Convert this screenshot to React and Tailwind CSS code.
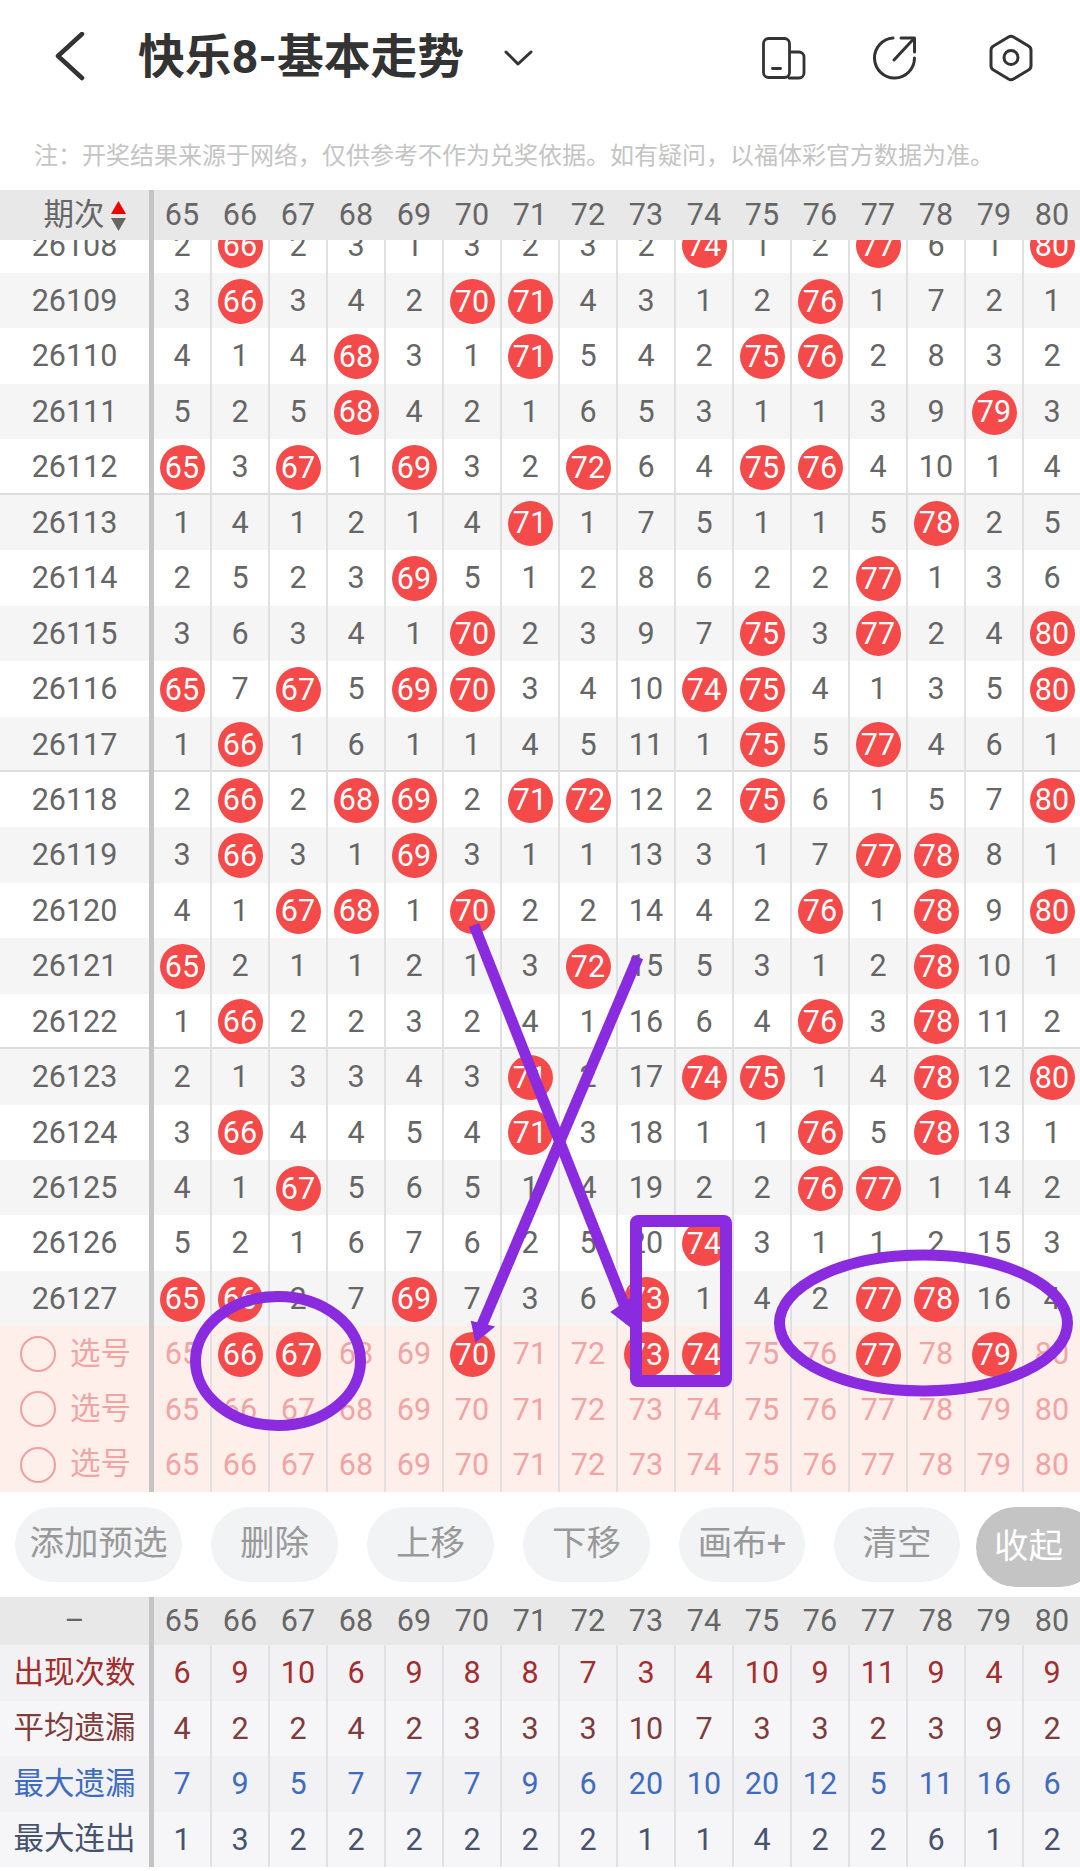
const COLS = [65,66,67,68,69,70,71,72,73,74,75,76,77,78,79,80];
const NOTICE = "注\uFF1A开奖结果来源于网络\uFF0C仅供参考不作为兑奖依据。如有疑问\uFF0C以福体彩官方数据为准。";
const ROWS = [
 ["26108",[2,66,2,3,1,3,2,3,2,74,1,2,77,6,1,80]],
 ["26109",[3,66,3,4,2,70,71,4,3,1,2,76,1,7,2,1]],
 ["26110",[4,1,4,68,3,1,71,5,4,2,75,76,2,8,3,2]],
 ["26111",[5,2,5,68,4,2,1,6,5,3,1,1,3,9,79,3]],
 ["26112",[65,3,67,1,69,3,2,72,6,4,75,76,4,10,1,4]],
 ["26113",[1,4,1,2,1,4,71,1,7,5,1,1,5,78,2,5]],
 ["26114",[2,5,2,3,69,5,1,2,8,6,2,2,77,1,3,6]],
 ["26115",[3,6,3,4,1,70,2,3,9,7,75,3,77,2,4,80]],
 ["26116",[65,7,67,5,69,70,3,4,10,74,75,4,1,3,5,80]],
 ["26117",[1,66,1,6,1,1,4,5,11,1,75,5,77,4,6,1]],
 ["26118",[2,66,2,68,69,2,71,72,12,2,75,6,1,5,7,80]],
 ["26119",[3,66,3,1,69,3,1,1,13,3,1,7,77,78,8,1]],
 ["26120",[4,1,67,68,1,70,2,2,14,4,2,76,1,78,9,80]],
 ["26121",[65,2,1,1,2,1,3,72,15,5,3,1,2,78,10,1]],
 ["26122",[1,66,2,2,3,2,4,1,16,6,4,76,3,78,11,2]],
 ["26123",[2,1,3,3,4,3,71,2,17,74,75,1,4,78,12,80]],
 ["26124",[3,66,4,4,5,4,71,3,18,1,1,76,5,78,13,1]],
 ["26125",[4,1,67,5,6,5,1,4,19,2,2,76,77,1,14,2]],
 ["26126",[5,2,1,6,7,6,2,5,20,74,3,1,1,2,15,3]],
 ["26127",[65,66,2,7,69,7,3,6,73,1,4,2,77,78,16,4]],
];
const PICKS = [[66,67,70,73,74,77,79],[],[]];
const STATS = [
 ["出现次数",[6,9,10,6,9,8,8,7,3,4,10,9,11,9,4,9],"text-[#a32e2e]","bg-[#f2f2f5]"],
 ["平均遗漏",[4,2,2,4,2,3,3,3,10,7,3,3,2,3,9,2],"text-[#7d3d3d]","bg-[#f6f6f8]"],
 ["最大遗漏",[7,9,5,7,7,7,9,6,20,10,20,12,5,11,16,6],"text-[#3f6cc0]","bg-[#f2f2f5]"],
 ["最大连出",[1,3,2,2,2,2,2,2,1,1,4,2,2,6,1,2],"text-[#47536e]","bg-[#f6f6f8]"],
];
const BUTTONS = [["添加预选","w-[167px]"],["删除","w-[127px]"],["上移","w-[127px]"],["下移","w-[127px]"],["画布+","w-[126px]"],["清空","w-[126px]"]];

function Ball({ n }) {
  return (
    <span className="w-[45px] h-[45px] pt-[1px] rounded-full bg-[#f44a4a] text-white flex items-center justify-center">{n}</span>
  );
}

function Cell({ children, line = true }) {
  return (
    <div className={`w-[58px] h-full pt-[1px] shrink-0 flex items-center justify-center box-border border-r-2 ${line ? "border-[#e0e0e0]" : "border-transparent"}`}>
      {children}
    </div>
  );
}

function Head({ left }) {
  return (
    <div className="flex h-full bg-[#e8e8e8] text-[#666666]">
      <div className="w-[154px] h-full pt-[1px] shrink-0 box-border border-r-[5px] border-[#c4c4c4] flex items-center justify-center">{left}</div>
      {COLS.map((c) => <Cell key={c} line={false}>{c}</Cell>)}
    </div>
  );
}

export default function App() {
  return (
    <div className="relative w-[1080px] h-[1871px] overflow-hidden bg-white text-[30.5px] leading-none font-[Roboto,'Noto_Sans_CJK_SC',sans-serif]">
      {/* Title bar */}
      <div className="h-[115px] flex items-center pl-[54px]">
        <svg className="w-[34px] h-[52px] shrink-0" viewBox="54 32 34 52" fill="none" stroke="#333" strokeWidth="4.5" strokeLinecap="round" strokeLinejoin="round">
          <path d="M82 34 58 56 82 78" />
        </svg>
        <h1 className="ml-[50px] w-[330px] shrink-0 text-[46.8px] font-bold text-[#333333] leading-none whitespace-nowrap">快乐8-基本走势</h1>
        <svg className="ml-[36px] w-[30px] h-[18px] shrink-0" viewBox="504 48 30 18" fill="none" stroke="#333" strokeWidth="3" strokeLinecap="round" strokeLinejoin="round">
          <path d="M506 51 518 63 531 51" />
        </svg>
        <div className="ml-[228px] flex items-center">
          <svg className="w-[44px] h-[44px]" viewBox="762 36 44 44" fill="none" stroke="#333" strokeWidth="2.8" strokeLinecap="round" strokeLinejoin="round">
            <rect x="763.5" y="38.5" width="26" height="39" rx="5" />
            <path d="M790 52h9a5 5 0 0 1 5 5v16a5 5 0 0 1-5 5h-10" />
            <path d="M772.5 68.5h8" />
          </svg>
          <svg className="ml-[67px] w-[44px] h-[44px]" viewBox="873 36 44 44" fill="none" stroke="#333" strokeWidth="3" strokeLinecap="round" strokeLinejoin="round">
            <path d="M893 38a20 20 0 1 0 21.5 20" />
            <path d="M894 60 914 38.5" />
            <path d="M901 38h13.5v14" />
          </svg>
          <svg className="ml-[72px] w-[44px] h-[48px]" viewBox="989 34 44 48" fill="none" stroke="#333" strokeWidth="3" strokeLinecap="round" strokeLinejoin="round">
            <path d="M1008.5 37a5 5 0 0 1 5 0l15 9a5 5 0 0 1 2.5 4.3v15.4a5 5 0 0 1-2.5 4.3l-15 9a5 5 0 0 1-5 0l-15-9a5 5 0 0 1-2.5-4.3V50.300a5 5 0 0 1 2.500-4.300z" />
            <circle cx="1011" cy="57.500" r="7" />
          </svg>
        </div>
      </div>

      {/* Notice */}
      <div className="h-[75px] pl-[34px] pt-[24px] text-[24px] leading-[30px] text-[#c4c4c4] whitespace-nowrap font-['Noto_Sans_CJK_SC',sans-serif]">
        {NOTICE}
      </div>

      {/* Trend table header */}
      <div className="h-[50px]">
        <Head left={
          <div className="flex items-center pl-[20px] gap-[6px]">
            <span>期次</span>
            <span className="flex flex-col gap-[4px]">
              <svg className="w-[15px] h-[13px]" viewBox="0 0 15 13"><path d="M7.500 0 15 13H0z" fill="#f00000" /></svg>
              <svg className="w-[15px] h-[13px]" viewBox="0 0 15 13"><path d="M0 0h15L7.500 13z" fill="#666666" /></svg>
            </span>
          </div>
        } />
      </div>

      {/* Trend table body */}
      <div className="h-[1253px] overflow-hidden text-[#666666]">
        <div className="mt-[-22.4px]">
          {ROWS.map(([id, vals], i) => (
            <div key={id} className={`flex h-[55.44px] box-border ${i % 2 === 1 ? "bg-[#f5f5f5]" : "bg-white"} ${(i === 4 || i === 9 || i === 14) ? "shadow-[inset_0_-2px_0_#dddddd]" : ""}`}>
              <div className="w-[154px] h-full pt-[1px] shrink-0 box-border border-r-[5px] border-[#c4c4c4] flex items-center justify-center">{id}</div>
              {vals.map((v, j) => (
                <Cell key={j}>{v === COLS[j] ? <Ball n={v} /> : v}</Cell>
              ))}
            </div>
          ))}
          {PICKS.map((p, i) => (
            <div key={i} className="flex h-[55.33px] bg-[#ffefea] text-[#f2a4a4]">
              <div className="w-[154px] h-full shrink-0 box-border border-r-[5px] border-[#c4c4c4] flex items-center pl-[20px] gap-[14px]">
                <span className="w-[36px] h-[36px] rounded-full border-2 border-[#f0a0a0] box-border" />
                <span>选号</span>
              </div>
              {COLS.map((c) => (
                <Cell key={c}>{p.includes(c) ? <Ball n={c} /> : c}</Cell>
              ))}
            </div>
          ))}
        </div>
      </div>

      {/* Action buttons */}
      <div className="h-[104px] pt-[14px] pl-[15px] flex items-start gap-[29px] text-[34.5px] text-[#999999] relative">
        {BUTTONS.map(([t, w]) => (
          <div key={t} className={`${w} h-[75px] pb-[3px] shrink-0 rounded-full bg-[#f2f3f5] flex items-center justify-center`}>{t}</div>
        ))}
        <div className="absolute left-[976px] top-[14px] w-[124px] h-[80px] pb-[2px] rounded-full bg-[#c4c4c4] text-white flex items-center pl-[18px]">收起</div>
      </div>

      {/* Statistics */}
      <div className="h-[48px]"><Head left="–" /></div>
      {STATS.map(([label, vals, color, bg]) => (
        <div key={label} className={`flex h-[55.5px] ${bg} ${color}`}>
          <div className="w-[154px] h-full shrink-0 box-border border-r-[5px] border-[#c4c4c4] flex items-center justify-center">{label}</div>
          {vals.map((v, j) => <Cell key={j}>{v}</Cell>)}
        </div>
      ))}

      {/* Hand-drawn annotation */}
      <svg className="absolute left-0 top-0 pointer-events-none" width="1080" height="1871" viewBox="0 0 1080 1871" fill="none" stroke="#8a2be0" strokeWidth="11">
        <path d="M474 925 631 1322" />
        <path d="M612 1312 634 1329 632 1298z" fill="#8a2be0" strokeWidth="2" />
        <path d="M638 957 479 1332" />
        <path d="M472 1322 476 1341 493 1327z" fill="#8a2be0" strokeWidth="2" />
        <ellipse cx="278" cy="1361" rx="82.500" ry="64.500" />
        <rect x="636" y="1221" width="90" height="160" rx="2" strokeWidth="12" strokeLinejoin="round" />
        <ellipse cx="923.500" cy="1323" rx="144" ry="68" />
      </svg>
    </div>
  );
}
